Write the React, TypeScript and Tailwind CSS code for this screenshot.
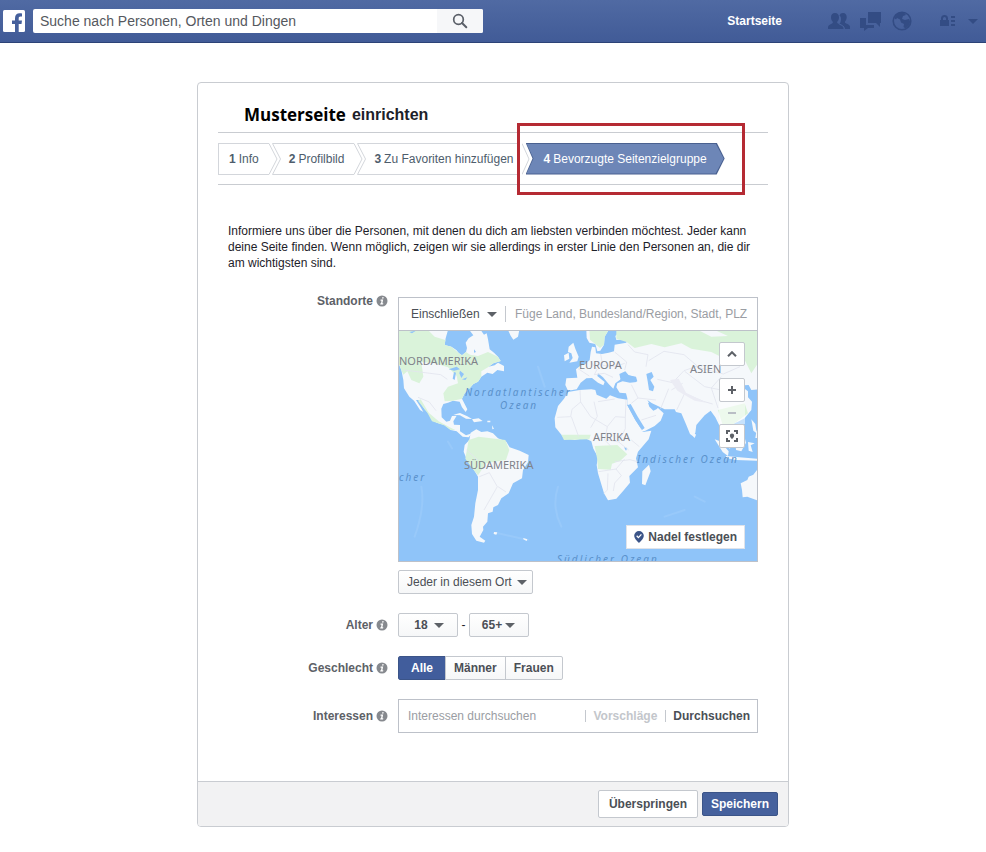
import { ReactNode } from 'react';

const steps = ['Info', 'Profilbild', 'Zu Favoriten hinzufügen'];
const genders = ['Alle', 'Männer', 'Frauen'];

const Caret = ({ className = '' }: { className?: string }) => (
  <svg viewBox="0 0 10 5" aria-hidden="true" className={`pointer-events-none h-[5px] w-[10px] ${className}`}>
    <path d="M0 0h10L5 5z" fill="currentColor" />
  </svg>
);

const InfoIcon = () => (
  <svg viewBox="0 0 12 12" aria-hidden="true" className="size-3 shrink-0">
    <circle cx="6" cy="6" r="5.5" fill="#86898e" />
    <path d="M6.2 2.2h1.6l-.3 1.4H5.9zM4.6 4.6h2.6l-.8 3.6h.9l-.2 1.2H4.2l.2-1.2h.6l.5-2.4h-1z" fill="#fff" />
  </svg>
);

const SearchIcon = () => (
  <svg viewBox="0 0 16 16" aria-hidden="true" className="size-4">
    <circle cx="6.5" cy="6.5" r="4.8" fill="none" stroke="#5b6069" strokeWidth="1.7" />
    <path d="M10 10l4.3 4.3" stroke="#5b6069" strokeWidth="2" strokeLinecap="round" />
  </svg>
);

const Logo = () => (
  <svg viewBox="0 0 22 22" aria-hidden="true" className="size-[22px]">
    <rect width="22" height="22" rx="1.5" fill="#fff" />
    <path
      d="M12 22v-8H9v-3.4h3V8.200C12 5 13.800 3.200 16.700 3.200c1 0 1.800.1 2.300.2v3.100h-1.500c-1.400 0-1.800.7-1.800 1.800v2.300H19l-.5 3.400h-2.800v8z"
      fill="#45609c"
    />
  </svg>
);

const FriendsIcon = () => (
  <svg viewBox="0 0 22 18" aria-hidden="true" className="h-[18px] w-[22px]">
    <path d="M11.500 3.500C12 1.800 13.300 1 15 1c2.500 0 3.700 1.700 3.700 4 0 2-.8 3.500-1.700 4.500v1.200c.5.900 4.500 1.300 5 3.800V17h-5.500c-.2-2.700-2.300-4-5-5 1-1.200 1.500-3 1.500-5 0-1.500-.5-2.500-1.500-3.500z" />
    <path d="M7 1c2.700 0 4 1.700 4 4.200 0 2-.8 3.600-1.800 4.600v1.200c.8.900 5.800 1.500 6.300 4.200V17H0v-1.800c.4-2.700 4-3.300 4.800-4.200V9.800C3.800 8.800 3 7.200 3 5.200 3 2.700 4.300 1 7 1z" />
    <path d="M11.300 12.200c2.600 1 4.800 2 5.200 4.600" fill="none" stroke="#4b659f" />
  </svg>
);

const MessagesIcon = () => (
  <svg viewBox="0 0 22 20" aria-hidden="true" className="h-5 w-[22px]">
    <path d="M8 1h13v11h-1v4l-4-4H8z" />
    <path d="M0 7h6v7h8v3H8l-4 3v-3H0z" />
  </svg>
);

const GlobeIcon = () => (
  <svg viewBox="0 0 20 20" aria-hidden="true" className="size-5">
    <circle cx="10" cy="10" r="8.800" fill="none" stroke="currentColor" strokeWidth="1.600" />
    <path d="M2 7l4-5 6-.5 2 2.500-3 1-1 3 3 1 4-1 1.500 3-2 4-3 2.500-2-1.500.5-3-3-1.500-1-3-3-1.500-1 1.500z" />
  </svg>
);

const PrivacyIcon = () => (
  <svg viewBox="0 0 16 14" aria-hidden="true" className="h-[14px] w-4">
    <path d="M0 6h1V4.500a3.500 3.500 0 017 0V6h1v6H0zm3 0h3V4.500a1.500 1.500 0 00-3 0z" fillRule="evenodd" />
    <path d="M11 2h4v2h-4zM11 6h4v2h-4zM11 10h4v2h-4z" />
  </svg>
);

const StepDivider = () => (
  <svg viewBox="0 0 14 32" aria-hidden="true" className="h-8 w-[14px] shrink-0" fill="none" stroke="#d3d6db">
    <path d="M0 .5h1l8 15.500-8 15.500H0M14 .5H4.500l8 15.500-8 15.500H14" />
  </svg>
);

const WorldMap = () => (
  <svg viewBox="3 3 1074 690" preserveAspectRatio="xMidYMid slice" aria-hidden="true" className="block h-[230px] w-full bg-[#8fc4f9]">
    <g fill="none" stroke="#98c9fa" strokeWidth="6" strokeLinecap="round">
      <path d="M70 470q12 60-20 150M150 335l12 20M480 470q-20 60 10 120M890 500l30 15M800 560l60-20M300 610l90 20M420 110l20 60" />
    </g>
    <g fill="#f5f8fb">
      {/* America */}
      <path d="M0 0H150L143 25 140 45 160 50 175 60 183 70 192 76 204 66 207 54 203 38 212 25 226 16 214 0H248L258 14 266 10 270 28 275 58 288 68 300 80 308 93 286 100 272 110 290 106 300 98 318 108 318 124 298 120 284 132 268 128 250 140 240 155 226 162 215 175 200 190 192 206 200 222 208 238 203 246 192 232 185 215 165 212 150 218 136 222 130 236 131 262 145 275 156 272 162 258 176 257 166 274 168 284 186 285 186 304 204 316 222 310 212 322 194 320 176 304 158 300 140 285 116 278 100 265 92 250 80 238 62 210 54 210 68 232 76 246 66 240 48 212 34 200 18 175 16 150 10 120 0 95z" />
      <path d="M218 308L235 298 250 306 268 304 285 310 300 325 325 335 335 352 365 362 392 375 390 397 375 420 372 445 345 460 332 490 310 505 300 525 286 532 284 545 270 550 268 575 255 590 256 600 245 620 262 632 258 638 235 632 222 612 220 585 228 560 232 520 240 480 240 440 225 415 205 385 197 365 200 345 214 330z" />
      <path d="M166 254l20-5 22 10 14 8-18-1-18-10zM222 268l20-3 12 8-26 4zM268 272h9v5h-9zM288 606l10 1-3 7-8-2zM376 624l12 4-2 5-10-5zM282 286l6 10-5 2zM330 0h34l-4 20-14 9-8-12z" />
      {/* Europe and Asia */}
      <path d="M505 145L538 143 534 118 550 105 562 102 575 90 578 66 582 50 592 52 594 70 612 72 632 68 648 64 650 44 685 38 686 28 655 30 652 18 670 0H1080V178L1060 180 1052 165 1038 166 1040 176 1050 184 1050 202 1062 215 1060 240 1040 265 1020 275 1004 282 1018 305 1010 325 996 325 984 304 978 318 990 340 997 358 984 346 968 320 966 290 952 262 938 242 920 256 895 285 892 308 884 318 876 312 865 285 850 250 834 246 830 238 800 238 775 226 762 220 748 210 760 230 772 238 780 234 797 250 788 272 770 288 742 302 732 305 724 278 700 240 688 222 688 205 684 190 665 188 655 172 658 160 674 154 696 158 716 156 712 142 692 136 676 128 668 148 652 160 646 176 632 162 615 142 600 130 598 138 620 156 616 166 600 158 582 144 565 145 548 158 536 178 510 182 502 165z" />
      <path d="M565 0H632L620 20 618 44 607 62 598 64 592 42 574 38 566 24zM512 50l14-12 6 18 10 24-4 14-24 4 10-14-4-14-10-4zM498 76l14-8 2 18-14 8z" />
      {/* Africa */}
      <path d="M510 186L545 180 580 178 592 180 596 194 625 206 636 196 660 205 688 209 688 226 712 270 730 298 734 306 760 302 752 328 720 365 714 385 720 412 694 438 696 458 676 482 655 506 630 511 618 490 600 430 596 405 600 382 586 356 580 334 560 324 530 330 498 324 472 292 470 265 480 228 498 206z" />
      <path d="M733 424l20-20 5 20-16 42-10-4zM886 306l8 8-4 10-6-6z" />
      {/* South-east Asia and Australia */}
      <path d="M950 328l16 6 26 30-2 14-16-12zM984 378l40 4 54 4v6l-64-2-30-6zM1012 330l26-14 6 22-14 26-16-4zM1050 336l20 4-12 6 6 20-12-4zM1060 268l12 14 4 28-10-8zM1076 300l4 24h-8zM1080 416L1066 434 1052 440 1048 450 1028 460 1032 480 1034 502 1048 500 1080 512zM1072 158l8 6v8l-10-4z" />
    </g>
    <g fill="#daf3da">
      <path d="M0 0H90L110 20 142 30 140 45 160 50 183 70 192 76 204 66 216 74 240 78 270 66 300 80 308 93 286 100 270 112 250 124 250 140 240 155 226 162 215 175 200 190 192 206 165 212 140 214 136 190 150 170 180 160 176 138 150 112 110 100 70 96 76 140 64 160 40 150 28 124 16 134 10 120 0 95z" />
      <path d="M212 330l30-10 80 10 12 30-10 30-60 10-24 36-18-22-20-28zM60 212l8-4 24 40 30 26 30 16 20 10-14 0-20-14-36-12-14-26z" />
      <path d="M574 0h58l-12 20-2 24-12 10-30-25zM655 0H1080V100L1060 130 1040 90 1000 96 940 66 880 56 850 40 800 52 760 42 710 54 686 36 655 26zM590 348l68-3 30 28-22 20-24 8-4 18-38-2-2-28zM490 314l88 0-4 14-76 2zM960 240l80-20 10 30-46 34-24 20z" />
    </g>
    <g fill="#f5f8fb">
      <path d="M900 0l50 0 40 18-50 2zM230 30l24-6 10 30-30 8z" />
    </g>
    {/* inland waters */}
    <g fill="#8fc4f9">
      <path d="M668 150l-4-18 18-8 10 12 22 4 4 14-20 2-16-8zM745 132l16-6 6 14-10 10 12 20-4 14-12-4-4-26zM688 226l10-4 20 36 22 36-8 6-20-30zM750 218l14 4 14 14-12 6-12-12zM678 352l10 2-4 8z" />
      <path d="M152 118l24-8 10 8-18 4zM168 126l6 2-4 22-6-4zM186 122l12 10-8 12-6-14zM192 148l16-6-6 8zM34 6l20-4-12 8zM228 58l6 8-6 2z" />
    </g>
    <g fill="none" stroke="#e2e5ee" strokeWidth="2.500">
      <path d="M478 262l40-2 4-22 26-22 30 44 50 30 24-30 30 2 2-52M520 260l22 60M548 218l-2-38M588 215l10 44-20 34M600 215l50-8M628 290l-8 40 20 20M682 262v34l-20 40 30 24M662 336l-32-6M650 395l46-6 22 6M602 425l52-8 16 20-20 22-4 24M630 430l-2 50-10 10M654 417l26-30M700 330l24 20" />
      <path d="M540 116l34 22M575 92l22 26-8 16 30-4 26 12M608 72l6 34 36 4 30-10M650 66l36 30-6 24M690 44l20 22 40 8-6 36M752 92l46-28 60 10 40 34-40 14-34 36-46-10M860 124l60 46 50 10M886 108l90 24 50-22M970 140l-30 34 20 60M820 180l34-20M812 176l-24 60M836 240l24-50 56 24 28 8M700 164l20 40 54 6M720 204l-20 16M730 270l44-14" />
      <path d="M18 120l110 14 20 14M60 202l34 14 20 26M244 440l30-12 24 42-40 70M300 470l24 16M206 360l34 30" />
    </g>
    <path d="M816 150l26-4 22 42 60 30-34-6-52-30z" fill="#ebecf4" />
  </svg>
);

const mapButton =
  'flex h-6 w-[26px] items-center justify-center rounded-[2px] border border-[#c4c8ce] bg-white text-[#5d6167]';

const MapPanel = () => (
  <div className="relative overflow-hidden border-t border-[#bdc1c9]">
    <WorldMap />
    <div className="pointer-events-none font-['Noto_Sans'] text-[11px] leading-4 text-[#7f828a]">
      <span className="absolute left-0 top-[22px]">NORDAMERIKA</span>
      <span className="absolute left-[65px] top-[126px]">SÜDAMERIKA</span>
      <span className="absolute left-[180px] top-[26px]">EUROPA</span>
      <span className="absolute left-[194px] top-[98px]">AFRIKA</span>
      <span className="absolute left-[291px] top-[30px]">ASIEN</span>
    </div>
    <div className="pointer-events-none font-['Noto_Sans'] text-[10px] leading-4 tracking-[2px] whitespace-nowrap text-[#5a91cb] italic">
      <span className="absolute left-[66px] top-[53px]">Nordatlantischer</span>
      <span className="absolute left-[101px] top-[66px]">Ozean</span>
      <span className="absolute left-0 top-[138px]">cher</span>
      <span className="absolute left-[238px] top-[120px]">Indischer Ozean</span>
      <span className="absolute left-[158px] top-[220px]">Südlicher Ozean</span>
    </div>
    <div className="absolute right-3 top-[11px] flex flex-col">
      <button type="button" aria-label="Karte einklappen" className={`${mapButton} mb-3`}>
        <svg viewBox="0 0 10 6" className="h-[6px] w-[10px]" fill="none" stroke="currentColor" strokeWidth="2">
          <path d="M1 5.200l4-4 4 4" />
        </svg>
      </button>
      <button type="button" aria-label="Vergrößern" className={mapButton}>
        <svg viewBox="0 0 8 8" className="size-2" stroke="currentColor" strokeWidth="2">
          <path d="M4 0v8M0 4h8" />
        </svg>
      </button>
      <button type="button" aria-label="Verkleinern" className="flex h-[22px] w-[26px] items-center justify-center bg-white/50 text-[#b9bec5]">
        <svg viewBox="0 0 8 2" className="h-[2px] w-2">
          <path d="M0 0h8v2H0z" fill="currentColor" />
        </svg>
      </button>
      <button type="button" aria-label="Zentrieren" className={mapButton}>
        <svg viewBox="0 0 12 12" className="size-3" fill="none" stroke="currentColor" strokeWidth="2">
          <path d="M1 4V1h3M8 1h3v3M11 8v3H8M4 11H1V8" />
          <path d="M6 3.500a2.200 2.200 0 012.200 2.200C8.200 7 6 9 6 9S3.800 7 3.800 5.700A2.200 2.200 0 016 3.500z" fill="currentColor" stroke="none" />
        </svg>
      </button>
    </div>
    <button
      type="button"
      className="absolute bottom-3 right-3 flex h-6 items-center gap-1 border border-[#dfe3ea] bg-white px-[7px] font-bold text-[#4b4f56]"
    >
      <svg viewBox="0 0 10 12" aria-hidden="true" className="h-3 w-[10px]">
        <path d="M5 0a4.800 4.800 0 014.800 4.800C9.800 8 5 12 5 12S.2 8 .2 4.800A4.800 4.800 0 015 0z" fill="#3b5488" />
        <path d="M2.700 4.800l1.700 1.800 3-3.200" fill="none" stroke="#fff" strokeWidth="1.300" />
      </svg>
      Nadel festlegen
    </button>
  </div>
);

interface FieldProps {
  label: string;
  htmlFor?: string;
  top?: boolean;
  children: ReactNode;
}

const Field = ({ label, htmlFor, top, children }: FieldProps) => (
  <div className={`grid grid-cols-[200px_1fr] ${top ? 'items-start' : 'items-center'}`}>
    <label
      htmlFor={htmlFor}
      className={`flex items-center justify-end gap-[3px] pr-[10px] font-bold text-[#5d6167] ${top ? 'h-2' : 'h-4'}`}
    >
      {label}
      <InfoIcon />
    </label>
    <div>{children}</div>
  </div>
);

const AgeSelect = ({ id, label, options }: { id?: string; label?: string; options: string[] }) => (
  <span className="relative inline-flex items-center">
    <select
      id={id}
      aria-label={label}
      className="h-6 w-[60px] appearance-none rounded-[2px] border border-[#c4c8ce] bg-linear-to-b from-white to-[#f6f7f8] pr-[14px] text-center font-bold text-[#4b4f56]"
    >
      {options.map((o) => (
        <option key={o}>{o}</option>
      ))}
    </select>
    <Caret className="absolute right-[14px] text-[#5d6167]" />
  </span>
);

export default function App() {
  return (
    <div className="min-h-screen bg-white pb-6 font-['Liberation_Sans',Arial,sans-serif] text-[12px] leading-4 text-[#1d2129]">
      <header className="flex h-[43px] items-center border-b border-[#2c4377] bg-linear-to-b from-[#506aa3] to-[#415b97] pl-[3px] pr-2">
        <a href="#" aria-label="Facebook">
          <Logo />
        </a>
        <form role="search" className="ml-2 flex h-6 w-[450px] overflow-hidden rounded-[2px] bg-white">
          <input
            type="text"
            aria-label="Suche"
            placeholder="Suche nach Personen, Orten und Dingen"
            className="min-w-0 flex-1 px-[7px] text-[14px] outline-none placeholder:text-[#55585e]"
          />
          <button type="button" aria-label="Suchen" className="flex w-[46px] items-center justify-center bg-[#f6f7f9]">
            <SearchIcon />
          </button>
        </form>
        <nav className="ml-auto flex items-center fill-[#334c84] text-[#334c84]">
          <a href="#" className="mr-[46px] font-bold text-white">
            Startseite
          </a>
          <a href="#" aria-label="Freundschaftsanfragen" className="mr-[10px]">
            <FriendsIcon />
          </a>
          <a href="#" aria-label="Nachrichten" className="mr-[10px]">
            <MessagesIcon />
          </a>
          <a href="#" aria-label="Benachrichtigungen" className="mr-7">
            <GlobeIcon />
          </a>
          <a href="#" aria-label="Privatsphäre" className="mr-3">
            <PrivacyIcon />
          </a>
          <button type="button" aria-label="Konto">
            <Caret />
          </button>
        </nav>
      </header>

      <main className="mx-auto mt-[39px] max-w-[592px] overflow-hidden rounded-[4px] border border-[#c9ccd1]">
        <div className="px-5">
          <h1 className="flex h-[50px] items-end gap-[6px] border-b border-[#c9ccd1] pb-[7px] pl-[26px] text-[16px] leading-5 font-bold">
            <span className="font-['Open_Sans'] text-[17px] text-black">Musterseite</span>
            <span>einrichten</span>
          </h1>
          <ol className="flex h-[52px] items-center border-b border-[#c9ccd1] text-[#4e5d6c]">
            {steps.map((step, i) => (
              <li key={step} className="flex items-center">
                <span
                  className={`flex h-8 items-center gap-[3px] border-y border-[#d3d6db] whitespace-nowrap ${
                    i === 0 ? 'border-l pl-[10px] pr-[9px]' : i === 1 ? 'pl-[7px] pr-[9px]' : 'pl-[7px] pr-1'
                  }`}
                >
                  <b>{i + 1}</b> {step}
                </span>
                {i < 2 && <StepDivider />}
              </li>
            ))}
            <li className="relative ml-2" aria-current="step">
              <div className="h-8 bg-[#4a6190] p-px [clip-path:polygon(0_0,calc(100%-8px)_0,100%_50%,calc(100%-8px)_100%,0_100%,7px_50%)]">
                <div className="flex h-full items-center gap-[3px] bg-[#6d86b7] px-[17px] whitespace-nowrap text-white [clip-path:polygon(0_0,calc(100%-8px)_0,100%_50%,calc(100%-8px)_100%,0_100%,7px_50%)]">
                  <b>4</b> Bevorzugte Seitenzielgruppe
                </div>
              </div>
              <svg viewBox="0 0 8 32" aria-hidden="true" className="absolute -left-1 top-0 h-8 w-2" fill="none" stroke="#d3d6db">
                <path d="M0 .5l7 15.500-7 15.500" />
              </svg>
              <span className="absolute -bottom-5 -left-[9px] -right-5 -top-5 border-3 border-[#b52a33]" />
            </li>
          </ol>
        </div>

        <p className="px-[30px] pt-[38px] text-[#1d2129]">
          Informiere uns über die Personen, mit denen du dich am liebsten verbinden möchtest. Jeder kann deine Seite
          finden. Wenn möglich, zeigen wir sie allerdings in erster Linie den Personen an, die dir am wichtigsten sind.
        </p>

        <form className="pr-[30px] pt-[26px]">
          <Field label="Standorte" htmlFor="locations" top>
            <div className="border border-[#bdc1c9]">
              <div className="flex h-8 items-center">
                <span className="relative flex items-center">
                  <select aria-label="Standortfilter" className="h-6 w-[106px] appearance-none pl-3 text-[#4b4f56]">
                    <option>Einschließen</option>
                    <option>Ausschließen</option>
                  </select>
                  <Caret className="absolute right-2 text-[#5d6167]" />
                </span>
                <input
                  id="locations"
                  type="text"
                  placeholder="Füge Land, Bundesland/Region, Stadt, PLZ"
                  className="h-4 min-w-0 flex-1 border-l border-[#c4c8ce] pl-[9px] outline-none placeholder:text-[#9a9da3]"
                />
              </div>
              <MapPanel />
            </div>
            <span className="relative mt-2 inline-flex items-center">
              <select
                aria-label="Personen an diesem Ort"
                className="h-6 w-[135px] appearance-none rounded-[2px] border border-[#c4c8ce] bg-linear-to-b from-white to-[#f6f7f8] pl-2 text-[#4b4f56]"
              >
                <option>Jeder in diesem Ort</option>
              </select>
              <Caret className="absolute right-[6px] text-[#5d6167]" />
            </span>
          </Field>

          <div className="mt-[19px] flex flex-col gap-[19px]">
            <Field label="Alter" htmlFor="age-from">
              <div className="flex items-center">
                <AgeSelect id="age-from" options={['18', '21', '25']} />
                <span className="w-[11px] text-center">-</span>
                <AgeSelect label="Alter bis" options={['65+', '64', '60']} />
              </div>
            </Field>
            <Field label="Geschlecht">
              <div role="radiogroup" aria-label="Geschlecht" className="flex h-6">
                {genders.map((gender, i) => (
                  <label
                    key={gender}
                    className="relative -mr-px flex items-center border border-[#c4c8ce] bg-linear-to-b from-white to-[#f6f7f8] px-2 font-bold text-[#4b4f56] first:rounded-l-[2px] first:px-3 last:rounded-r-[2px] has-checked:border-[#3b5488] has-checked:from-[#415d9c] has-checked:to-[#415d9c] has-checked:text-white"
                  >
                    <input type="radio" name="gender" defaultChecked={i === 0} className="sr-only" />
                    {gender}
                  </label>
                ))}
              </div>
            </Field>
            <Field label="Interessen" htmlFor="interests">
              <div className="flex h-[34px] items-center border border-[#bdc1c9] pr-[7px] font-bold">
                <input
                  id="interests"
                  type="text"
                  placeholder="Interessen durchsuchen"
                  className="min-w-0 flex-1 pl-[9px] font-normal outline-none placeholder:text-[#9a9da3]"
                />
                <button type="button" className="border-l border-[#c4c8ce] px-2 leading-3 text-[#c3c6cb]">
                  Vorschläge
                </button>
                <button type="button" className="border-l border-[#c4c8ce] pl-[7px] leading-3 text-[#4b4f56]">
                  Durchsuchen
                </button>
              </div>
            </Field>
          </div>
        </form>

        <footer className="mt-12 flex h-[45px] items-center justify-end gap-1 border-t border-[#c9ccd1] bg-[#f2f2f3] pr-[10px] font-bold">
          <button type="button" className="h-7 rounded-[2px] border border-[#c4c8ce] bg-white px-[10px] text-[#4b4f56]">
            Überspringen
          </button>
          <button type="submit" className="h-6 rounded-[2px] border border-[#3b5488] bg-[#46619d] px-2 text-white">
            Speichern
          </button>
        </footer>
      </main>
    </div>
  );
}
